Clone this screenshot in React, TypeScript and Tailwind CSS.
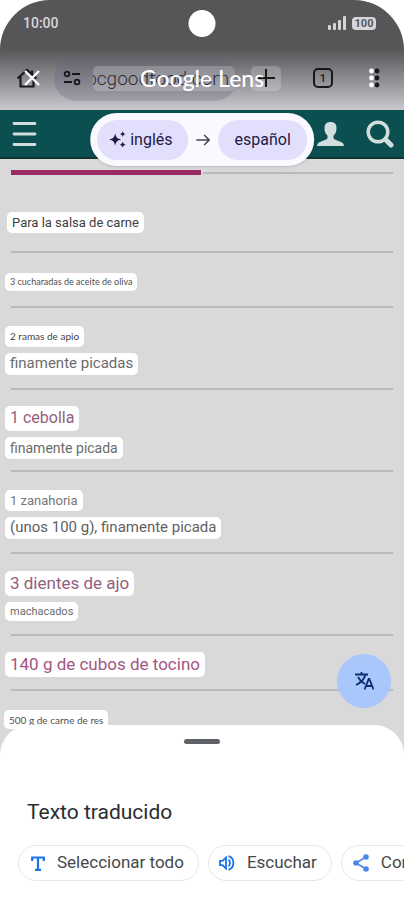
import { useState } from "react";

type Label = { text: string; cls: string };

const ingredients: Label[][] = [
  [{ text: "3 cucharadas de aceite de oliva", cls: "h-[18px] font-[Lato,sans-serif] text-[9px] text-[#505050]" }],
  [
    { text: "2 ramas de apio", cls: "h-[21px] font-[Lato,sans-serif] text-[10px] text-[#444]" },
    { text: "finamente picadas", cls: "h-[22px] text-[15px] text-[#6b6b6b]" },
  ],
  [
    { text: "1 cebolla", cls: "h-[25px] text-[16px] text-[#94607b]" },
    { text: "finamente picada", cls: "h-[22px] text-[14px] text-[#6b6b6b]" },
  ],
  [
    { text: "1 zanahoria", cls: "h-[21px] text-[13px] text-[#777]" },
    { text: "(unos 100 g), finamente picada", cls: "h-[22px] text-[15px] text-[#5f5f5f]" },
  ],
  [
    { text: "3 dientes de ajo", cls: "h-[25px] text-[17px] text-[#94607b]" },
    { text: "machacados", cls: "h-[19px] text-[11px] text-[#6b6b6b]" },
  ],
  [{ text: "140 g de cubos de tocino", cls: "h-[25px] text-[17px] text-[#a35580]" }],
];

function Tag({ text, cls }: Label) {
  return (
    <span className={`flex w-fit items-center whitespace-nowrap rounded-[5px] bg-white px-[5px] leading-none ${cls}`}>
      {text}
    </span>
  );
}

function StatusBar() {
  return (
    <div className="relative flex h-[46px] items-center justify-between pl-[23px] pr-7 text-[#d6d6d8]">
      <span className="text-[14px] font-medium">10:00</span>
      <span className="absolute left-1/2 top-[10px] size-[27px] -translate-x-1/2 rounded-full bg-white" />
      <div className="flex items-center gap-[6px]">
        <svg width="18" height="14" viewBox="0 0 18 14" fill="currentColor" aria-hidden="true">
          <rect x="0" y="9" width="3" height="5" rx="1" />
          <rect x="5" y="7" width="3" height="7" rx="1" />
          <rect x="10" y="4" width="3" height="10" rx="1" />
          <rect x="15" y="0" width="3" height="14" rx="1" />
        </svg>
        <span className="flex h-[13px] w-6 items-center justify-center rounded-[4px] bg-[#d6d6d8] text-[11px] font-bold leading-none text-[#58585a]">
          100
        </span>
      </div>
    </div>
  );
}

function BrowserBar() {
  return (
    <div className="flex h-16 items-center pl-4 pr-4 text-[#17171c]">
      <button aria-label="Inicio" className="mr-[14px]">
        <svg width="24" height="24" viewBox="0 0 24 24" fill="none" stroke="currentColor" strokeWidth="2.2" aria-hidden="true">
          <path d="M1.500 12.500 11 4l9.500 8.500M4.500 10.500v10h13v-10M16 8V4.500" />
        </svg>
      </button>
      <div className="flex h-[45px] min-w-0 flex-1 items-center rounded-full bg-[#65657a]/30 pl-[9px] pr-[2px]">
        <svg className="mr-3 shrink-0" width="18" height="16" viewBox="0 0 18 16" fill="none" stroke="currentColor" strokeWidth="1.800" aria-hidden="true">
          <circle cx="4" cy="4" r="2.400" />
          <path d="M9 4h8M1 12h8" />
          <circle cx="14" cy="12" r="2.400" />
        </svg>
        <div className="flex h-[25px] min-w-0 flex-1 justify-end overflow-hidden rounded-[5px] bg-white/20 pr-[6px]">
          <span className="whitespace-nowrap text-[19px] font-light leading-[25px] text-[#2c2c33]">ocgoodfood.com</span>
        </div>
      </div>
      <button aria-label="Nueva pestaña" className="ml-[14px] flex h-[25px] w-[30px] items-center justify-center rounded-[5px] bg-white/20">
        <svg width="18" height="18" viewBox="0 0 18 18" stroke="currentColor" strokeWidth="2" aria-hidden="true">
          <path d="M9 0v18M0 9h18" />
        </svg>
      </button>
      <button aria-label="Pestañas abiertas" className="ml-8 flex size-5 items-center justify-center rounded-[5px] border-2 border-[#17171c] text-[11px] font-medium leading-none">
        1
      </button>
      <button aria-label="Menú del navegador" className="ml-8">
        <svg width="23" height="20" viewBox="0 0 23 20" fill="currentColor" aria-hidden="true">
          <circle cx="12" cy="3" r="2.400" />
          <circle cx="12" cy="10" r="2.400" />
          <circle cx="12" cy="17" r="2.400" />
        </svg>
      </button>
    </div>
  );
}

// Lens controls float over the browser toolbar
function LensBar() {
  return (
    <div className="absolute inset-x-0 bottom-0 flex h-16 items-center justify-between pl-6 pr-[30px] text-white">
      <button aria-label="Cerrar">
        <svg width="16" height="16" viewBox="0 0 16 16" stroke="currentColor" strokeWidth="2.400" aria-hidden="true">
          <path d="m1 1 14 14M15 1 1 15" />
        </svg>
      </button>
      <h1 className="absolute left-1/2 -translate-x-1/2 whitespace-nowrap font-[Lato,sans-serif] text-[23px] font-medium leading-none">
        Google Lens
      </h1>
      <button aria-label="Más opciones">
        <svg width="5" height="20" viewBox="0 0 5 20" fill="currentColor" aria-hidden="true">
          <circle cx="2.500" cy="3" r="2.400" />
          <circle cx="2.500" cy="10" r="2.400" />
          <circle cx="2.500" cy="17" r="2.400" />
        </svg>
      </button>
    </div>
  );
}

function LanguagePicker() {
  return (
    <div className="absolute left-1/2 top-[3px] z-10 flex h-[53px] -translate-x-1/2 items-center rounded-full bg-[#faf9ff] px-[7px] text-base text-[#211b46] shadow-sm">
      <button className="flex h-10 items-center gap-1 rounded-full bg-[#e2dffd] pl-3 pr-4">
        <svg width="17" height="17" viewBox="0 0 17 17" fill="currentColor" aria-hidden="true">
          <path d="M6 2.500c1 4 2 5 6 6-4 1-5 2-6 6-1-4-2-5-6-6 4-1 5-2 6-6ZM13.500 0c.5 2 1 2.600 3 3.100-2 .5-2.500 1.100-3 3.100-.5-2-1-2.600-3-3.100 2-.5 2.500-1.100 3-3.100ZM13.500 10.600c.5 2 1 2.600 3 3.100-2 .5-2.500 1.100-3 3.100-.5-2-1-2.600-3-3.100 2-.5 2.500-1.100 3-3.100Z" />
        </svg>
        inglés
      </button>
      <svg className="mx-2" width="14" height="12" viewBox="0 0 14 12" fill="none" stroke="#47464f" strokeWidth="1.600" aria-hidden="true">
        <path d="M0 6h12.500M8 1l5 5-5 5" />
      </svg>
      <button className="flex h-10 items-center rounded-full bg-[#e2dffd] px-4">español</button>
    </div>
  );
}

function SiteHeader() {
  return (
    <header className="relative flex h-[49px] items-center justify-between border-b-2 border-[#123433] bg-[#0b4f51] pl-3 pr-[10px] text-[#d2dedd]">
      <button aria-label="Menú">
        <svg width="26" height="26" viewBox="0 0 26 26" stroke="currentColor" strokeWidth="2.800" strokeLinecap="round" aria-hidden="true">
          <path d="M2 2.500h21M2 13h21M2 23.500h21" />
        </svg>
      </button>
      <LanguagePicker />
      <div className="flex items-center gap-[22px]">
        <button aria-label="Cuenta">
          <svg width="27" height="24" viewBox="0 0 27 24" fill="currentColor" aria-hidden="true">
            <path d="M13.500 0C9.500 0 7.500 2 7.500 6c0 3.500 1 6 3 7.500v2.200c0 1-.7 1.500-2 2L3 20c-2 .8-2.700 2-3 4h27c-.3-2-1-3.200-3-4l-5.500-2.300c-1.300-.5-2-1-2-2v-2.200c2-1.500 3-4 3-7.500 0-4-2-6-6-6Z" />
          </svg>
        </button>
        <button aria-label="Buscar">
          <svg width="28" height="28" viewBox="0 0 28 28" fill="none" stroke="currentColor" aria-hidden="true">
            <circle cx="12" cy="12" r="9.800" strokeWidth="3.500" />
            <path d="m20 20 5 5" strokeWidth="5" strokeLinecap="round" />
          </svg>
        </button>
      </div>
    </header>
  );
}

function TranslateIcon() {
  return (
    <svg width="20" height="20" viewBox="0 0 20 20" fill="none" stroke="#0b2f70" strokeWidth="1.800" aria-hidden="true">
      <path d="M1 3.500h13M7.500 1v2.500M11.500 3.500C10.500 7.500 7 11.500 2 14M4 6c1.500 3 4 5.500 7 7" />
      <path d="M10.500 18.500 14.700 8h.6l4.200 10.500M12 15h6" />
    </svg>
  );
}

const chip = "flex h-9 shrink-0 items-center rounded-full border border-[#e6e7ea] pr-[14px] text-[17px] text-[#45484c]";

export default function App() {
  const [translated, setTranslated] = useState(true);

  return (
    <div className="flex min-h-screen flex-col overflow-hidden rounded-t-[50px] bg-[#d9d9d9] font-[Roboto,sans-serif]">
      <div className="relative bg-linear-to-b from-[#565658] from-[44%] to-[#cbc8cf]">
        <StatusBar />
        <BrowserBar />
        <LensBar />
      </div>
      <SiteHeader />

      <main className="relative pb-2">
        <div className="flex items-center gap-[2px] px-[11px] pt-[11px]">
          <div className="h-[5px] flex-1 bg-[#992c63]" />
          <div className="h-[2px] flex-1 bg-[#b9b9b9]" />
        </div>
        <div className="pl-[7px] pt-[37px]">
          <Tag text="Para la salsa de carne" cls="h-[21px] text-[13px] text-[#404040]" />
        </div>
        <ul className="mt-[18px]">
          {ingredients.map((labels) => (
            <li key={labels[0].text}>
              <div className="mx-[11px] h-[2px] bg-[#b9b9b9]" />
              <div className={`flex flex-col justify-center gap-[6px] pl-[5px] pt-1 ${labels.length > 1 ? "h-20" : "h-[53px]"}`}>
                {labels.map((l) => (
                  <Tag key={l.text} {...l} />
                ))}
              </div>
            </li>
          ))}
          <li>
            <div className="mx-[11px] h-[2px] bg-[#b9b9b9]" />
            <div className="pl-[4px] pt-[19px]">
              <Tag text="500 g de carne de res" cls="h-[19px] font-[Lato,sans-serif] text-[10px] text-[#505050]" />
            </div>
          </li>
        </ul>
        <button
          aria-label="Traducir"
          aria-pressed={translated}
          onClick={() => setTranslated(!translated)}
          className="absolute bottom-[29px] right-[13px] flex size-[54px] items-center justify-center rounded-full bg-[#a9c7fb]"
        >
          <TranslateIcon />
        </button>
      </main>

      <section className="relative -mt-3 flex-1 overflow-hidden rounded-t-[30px] bg-white pb-5 pt-[14px]">
        <div className="mx-auto h-[5px] w-9 rounded-full bg-[#5f6368]" />
        <h2 className="mt-[54px] px-[27px] text-[21px] leading-7 text-[#2b2c2e]">Texto traducido</h2>
        <div className="mt-[19px] flex gap-[9px] pl-[18px]">
          <button className={`${chip} pl-3`}>
            <svg className="mr-3" width="14" height="15" viewBox="0 0 14 15" fill="none" stroke="#1a73e8" strokeWidth="2.200" aria-hidden="true">
              <path d="M1.200 5V1.500h11.600V5M7 1.500v12M4 13.800h6" />
            </svg>
            Seleccionar todo
          </button>
          <button className={`${chip} pl-[10px]`}>
            <svg className="mr-3" width="16" height="16" viewBox="0 0 16 16" fill="none" stroke="#1a73e8" strokeWidth="1.800" aria-hidden="true">
              <path d="M1 5.800h2.500L7 2.500v11l-3.500-3.300H1Z" />
              <path d="M9.500 4.500c2 1.500 2 5.500 0 7M9.500 1.200c6.500 2 6.500 11.600 0 13.600" />
            </svg>
            Escuchar
          </button>
          <button className={`${chip} pl-[11px]`}>
            <svg className="mr-3" width="16" height="18" viewBox="0 0 16 18" fill="#4a86e8" stroke="#4a86e8" strokeWidth="1.600" aria-hidden="true">
              <path d="M13 3 3 9l10 6" fill="none" />
              <circle cx="13" cy="3" r="2" />
              <circle cx="3" cy="9" r="2" />
              <circle cx="13" cy="15" r="2" />
            </svg>
            Compartir
          </button>
        </div>
      </section>
    </div>
  );
}
